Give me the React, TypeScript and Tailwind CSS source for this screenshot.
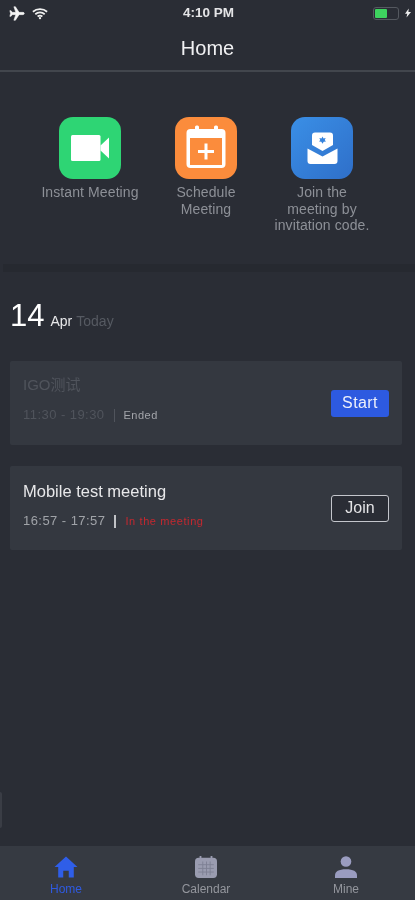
import React from "react";

function Plane() {
  return (
    <svg viewBox="0 0 24 24" className="w-[17px] h-[17px]" fill="#f4f4f4" stroke="#f4f4f4" strokeWidth="0.800">
      <path d="M23 12c0-1-1-1.600-2-1.600h-5.400L10.500 2.500H8.300l2.700 7.900H6L4.300 8H2.600l1 4-1 4h1.700L6 13.600h5l-2.700 7.900h2.200l5.100-7.900H21c1 0 2-.6 2-1.600z" />
    </svg>
  );
}

function Wifi() {
  return (
    <svg viewBox="0 0 18 14" className="w-[16px] h-[13px]" fill="none" stroke="#f0f0f0" strokeWidth="2">
      <path d="M1 5c4.500-4 11.500-4 16 0" />
      <path d="M3.700 7.800c3-2.600 7.600-2.600 10.600 0" />
      <path d="M6.300 10.400c1.600-1.200 3.800-1.200 5.400 0" />
      <circle cx="9" cy="12.300" r="1.300" fill="#f0f0f0" stroke="none" />
    </svg>
  );
}

function Video() {
  return (
    <svg viewBox="0 0 62 62" className="w-[62px] h-[62px]">
      <rect x="12" y="18" width="29.500" height="26" rx="1.500" fill="#fff" />
      <path d="M41.500 28.500 50 20.500v21l-8.500-8z" fill="#fff" />
    </svg>
  );
}

function CalendarPlus() {
  return (
    <svg viewBox="0 0 62 62" className="w-[62px] h-[62px]">
      <rect x="11.500" y="12" width="39" height="39" rx="4" fill="#fff" />
      <rect x="20" y="8.500" width="4" height="7" rx="1.500" fill="#fff" />
      <rect x="39" y="8.500" width="4" height="7" rx="1.500" fill="#fff" />
      <rect x="15" y="21" width="32" height="27" fill="#fb8c3c" />
      <rect x="23" y="33" width="16" height="3" fill="#fff" />
      <rect x="29.500" y="26.500" width="3" height="16" fill="#fff" />
    </svg>
  );
}

function Invite() {
  return (
    <svg viewBox="0 0 62 62" className="w-[62px] h-[62px]">
      <path d="M21 18.500a3 3 0 0 1 3-3h15a3 3 0 0 1 3 3v9.500l-10.500 6-10.500-6z" fill="#fff" />
      <path d="M16.500 31.500 31.500 39.500 46.500 31.500V44a3 3 0 0 1-3 3h-24a3 3 0 0 1-3-3z" fill="#fff" />
      <path d="M31.500 19.500l1 2 2.200-.6-1 2 1.300 1.700-2.300.1-1.200 2-1.200-2-2.300-.1 1.300-1.700-1-2 2.200.6z" fill="#3583dd" />
    </svg>
  );
}

function Action({ bg, icon, label }: { bg: string; icon: React.ReactNode; label: React.ReactNode }) {
  return (
    <div className="flex flex-col items-center">
      <div className={`w-[62px] h-[62px] rounded-[14px] ${bg}`}>{icon}</div>
      <div className="mt-[5px] w-[116px] text-center text-[14px] leading-[16.500px] text-[#8d9097] tracking-[0.1px]">
        {label}
      </div>
    </div>
  );
}

function Tab({ icon, label, color }: { icon: React.ReactNode; label: string; color: string }) {
  return (
    <div className="flex flex-col items-center">
      {icon}
      <div className={`mt-[5px] text-[12px] leading-[13px] ${color}`}>{label}</div>
    </div>
  );
}

export default function App() {
  return (
    <div className="relative w-[415px] h-[900px] flex flex-col bg-[#2a2d35] overflow-hidden blur-[0.4px] font-['Liberation_Sans',Arial,sans-serif]">
      <div className="h-[25px] flex items-center justify-between pl-[8px] pr-[4px] pt-[1px]">
        <div className="flex items-center gap-[7px] w-[80px]">
          <Plane />
          <Wifi />
        </div>
        <div className="text-[13.500px] font-bold text-[#e4e4e6] pr-[2px]">4:10 PM</div>
        <div className="flex items-center justify-end gap-[6px] w-[80px]">
          <div className="w-[26px] h-[13px] rounded-[3px] border border-[#555960] p-[1px] flex">
            <div className="w-[12px] h-full bg-[#3ed35f] rounded-[1px]" />
          </div>
          <svg viewBox="0 0 8 12" className="w-[6px] h-[10px]" fill="#eee"><path d="M5 0 0 7h3l-1 5 6-7.500H4.500z" /></svg>
        </div>
      </div>
      <div className="h-[47px] flex items-center justify-center border-b-[2px] border-[#42464d] text-[20px] text-[#f0f0f2]">
        Home
      </div>

      <div className="pt-[45px] pl-[32px] h-[192px]">
        <div className="grid grid-cols-3 w-[348px]">
          <Action bg="bg-[#2ed574]" icon={<Video />} label={<span className="whitespace-nowrap">Instant Meeting</span>} />
          <Action bg="bg-[#fb8c3c]" icon={<CalendarPlus />} label={<>Schedule<br />Meeting</>} />
          <Action bg="bg-gradient-to-br from-[#3a8fe6] to-[#2f6fc9]" icon={<Invite />} label={<>Join the<br />meeting by<br />invitation code.</>} />
        </div>
      </div>

      <div className="h-[8px] ml-[3px] bg-[#262930]" />

      <div className="h-[89px] px-[10px] pt-[25px] flex items-baseline text-white">
        <span className="text-[31px] leading-[38px]">14</span>
        <span className="ml-[6px] text-[14px] text-[#e8e8ea]">Apr</span>
        <span className="ml-[4px] text-[14px] text-[#565a62]">Today</span>
      </div>

      <div className="pl-[10px] pr-[13px] flex flex-col gap-[21px]">
        <div className="h-[84px] bg-[#343840] rounded-[2px] flex items-center justify-between px-[13px]">
          <div className="self-start pt-[14px]">
            <div className="text-[15px] leading-[20px] text-[#50545c] font-['Liberation_Sans','Noto_Sans_CJK_SC',sans-serif]">IGO测试</div>
            <div className="mt-[12px] flex items-center text-[13px] leading-[16px] text-[#50545c] tracking-[0.45px]">
              <span>11:30 - 19:30</span>
              <span className="w-[1px] h-[13px] bg-[#50545c] mx-[9px]" />
              <span className="text-[11px] text-[#a3a5aa] tracking-[0.5px]">Ended</span>
            </div>
          </div>
          <div className="w-[58px] h-[27px] rounded-[3px] bg-[#2d5ae0] flex items-center justify-center text-[16px] tracking-[0.4px] text-[#eef1fb]">
            Start
          </div>
        </div>

        <div className="h-[84px] bg-[#343840] rounded-[2px] flex items-center justify-between px-[13px]">
          <div className="self-start pt-[15px]">
            <div className="text-[16.500px] leading-[20px] text-[#e8e8ea]">Mobile test meeting</div>
            <div className="mt-[12px] flex items-center text-[13px] leading-[16px] text-[#a0a3a8] tracking-[0.45px]">
              <span>16:57 - 17:57</span>
              <span className="w-[2px] h-[13px] bg-[#c0c2c6] mx-[9px]" />
              <span className="text-[11px] text-[#c4282f] tracking-[0.6px]">In the meeting</span>
            </div>
          </div>
          <div className="w-[58px] h-[27px] rounded-[3px] border-[1.500px] border-[#c4c6cc] bg-[#2a2d35] flex items-center justify-center text-[16px] text-[#e4e4e6]">
            Join
          </div>
        </div>
      </div>

      <div className="mt-auto h-[54px] bg-[#363a42] grid grid-cols-[132px_148px_132px] pt-[10px]">
        <Tab
          color="text-[#2f5ae0]"
          label="Home"
          icon={
            <svg viewBox="0 0 26 24" className="w-[24px] h-[22px]" fill="#2f5ee8">
              <path d="M13 0.500 0.500 12h4v11.500h5.500V16h6v7.500h5.500V12h4z" />
            </svg>
          }
        />
        <Tab
          color="text-[#94969d]"
          label="Calendar"
          icon={
            <svg viewBox="0 0 26 24" className="w-[24px] h-[22px]">
              <rect x="1" y="2" width="24" height="22" rx="4" fill="#9a9cb0" />
              <rect x="6" y="0" width="2" height="4" fill="#9a9cb0" />
              <rect x="18" y="0" width="2" height="4" fill="#9a9cb0" />
              <g fill="#7e8094">
                <rect x="4.500" y="9" width="17" height="1" />
                <rect x="4.500" y="13" width="17" height="1" />
                <rect x="4.500" y="17" width="17" height="1" />
                <rect x="9" y="6" width="1" height="15" />
                <rect x="13" y="6" width="1" height="15" />
                <rect x="17" y="6" width="1" height="15" />
              </g>
            </svg>
          }
        />
        <Tab
          color="text-[#94969d]"
          label="Mine"
          icon={
            <svg viewBox="0 0 26 24" className="w-[24px] h-[22px]" fill="#9a9cc0">
              <circle cx="13" cy="6" r="5.800" />
              <path d="M1 24v-3c0-4 4-6.500 12-6.500S25 17 25 21v3z" />
            </svg>
          }
        />
      </div>
      <div className="absolute left-0 top-[792px] w-[2px] h-[36px] bg-[#3a3d45] rounded-r-[2px]" />
    </div>
  );
}
